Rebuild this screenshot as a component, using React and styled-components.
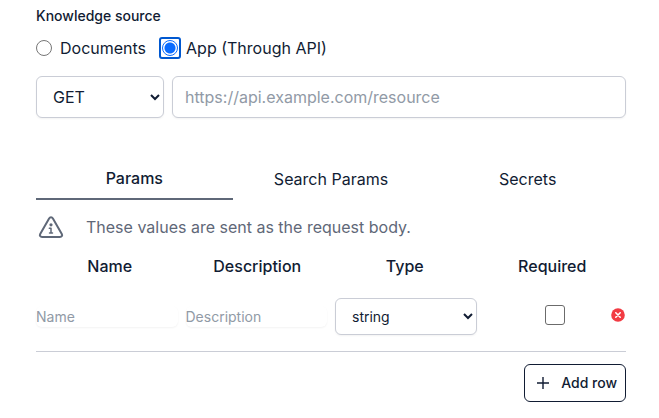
import React, { useState } from "react";
import styled, { createGlobalStyle } from "styled-components";

const ink = "#111c33";
const line = "#cacdd6";
const muted = "#5f6878";

const GlobalStyle = createGlobalStyle`
  *, *::before, *::after { box-sizing: border-box; }
  body {
    margin: 0;
    background: #fff;
    color: ${ink};
    font-family: Inter, sans-serif;
    font-size: 16px;
    line-height: 24px;
  }
  button, input, select { font: inherit; color: inherit; margin: 0; }
`;

const Page = styled.main`
  padding: 6px 33px 16px 36px;
`;

const SourceGroup = styled.fieldset`
  border: 0;
  margin: 0;
  padding: 0;
`;

const Legend = styled.legend`
  padding: 0;
  font-size: 14px;
  line-height: 20px;
  font-weight: 500;
`;

const Choices = styled.div`
  display: flex;
  gap: 13px;
  padding-top: 10px;
`;

const Choice = styled.label`
  display: flex;
  align-items: center;
  gap: 8px;
`;

const RadioFrame = styled.span`
  display: flex;
  padding: ${(p) => (p.$on ? "1px" : "0")};
  border: ${(p) => (p.$on ? "2px solid #0058d0" : "0")};
  border-radius: 3px;
  margin-right: ${(p) => (p.$on ? "-3px" : "0")};
`;

const Radio = styled.input`
  appearance: none;
  flex: none;
  width: 16px;
  height: 16px;
  border: 1px solid #767676;
  border-radius: 50%;
  background: #fff;

  &:checked {
    border-color: #0a6cff;
    background: radial-gradient(circle, #0a6cff 0 5px, #fff 6px);
  }
`;

const RequestRow = styled.div`
  display: flex;
  gap: 8px;
  margin-top: 16px;
`;

const Select = styled.select`
  width: ${(p) => p.$width};
  height: ${(p) => (p.$small ? "37px" : "42px")};
  padding: ${(p) => (p.$small ? "7px" : "8px")} 0 8px 12px;
  border: 1px solid ${line};
  border-radius: 6px;
  background: #fff;
  box-shadow: 0 1px 2px rgba(0, 0, 0, 0.05);
  font-size: ${(p) => (p.$small ? "14px" : "16px")};
`;

const UrlInput = styled.input`
  flex: 1;
  min-width: 0;
  height: 42px;
  padding: 8px 12px;
  border: 1px solid ${line};
  border-radius: 6px;
  box-shadow: 0 1px 2px rgba(0, 0, 0, 0.05);

  &::placeholder { color: #919aa6; }
`;

const Tabs = styled.div`
  display: grid;
  grid-template-columns: repeat(3, 1fr);
  margin-top: 40px;
`;

const Tab = styled.button`
  height: 42px;
  padding: 0;
  border: 0;
  border-bottom: ${(p) => (p.$active ? `2px solid ${muted}` : "0")};
  background: none;
  font-weight: ${(p) => (p.$active ? 500 : 400)};
`;

const Notice = styled.p`
  display: flex;
  align-items: center;
  gap: 22px;
  margin: 12px 0 0;
  padding-left: 2px;
  height: 30px;
  color: ${muted};
`;

const Table = styled.table`
  display: block;
  margin-top: 12px;
  border-bottom: 1px solid ${line};
`;

const TableSection = styled.thead`
  display: block;
`;

const TableRow = styled.tr`
  display: grid;
  grid-template-columns: repeat(4, minmax(0, 1fr));
  align-items: center;
  gap: ${(p) => (p.$body ? "8px" : "0")};
  padding: ${(p) => (p.$body ? "20px 0 16px" : "0")};
`;

const HeadCell = styled.th`
  padding: 0;
  font-weight: 500;
  text-align: center;
`;

const Cell = styled.td`
  display: flex;
  padding: 0;
`;

const ActionCell = styled(Cell)`
  display: grid;
  grid-template-columns: 1fr auto 1fr;
  align-items: center;
  padding-bottom: 3px;
`;

const PlainInput = styled.input`
  width: 100%;
  height: 21px;
  padding: 0;
  border: 0;
  border-radius: 6px;
  background: #fff;
  box-shadow: 0 1px 2px rgba(0, 0, 0, 0.05);
  font-size: 14px;
  line-height: 20px;

  &::placeholder { color: #919aa6; }
`;

const Checkbox = styled.input`
  appearance: none;
  grid-column: 2;
  width: 20px;
  height: 20px;
  border: 1px solid #6b6b6b;
  border-radius: 3px;
  background: #fff;

  &:checked { background: #0a6cff; }
`;

const DeleteButton = styled.button`
  display: flex;
  justify-self: end;
  padding: 0;
  border: 0;
  background: none;
`;

const Footer = styled.div`
  display: flex;
  justify-content: flex-end;
  margin-top: 12px;
`;

const AddButton = styled.button`
  display: flex;
  align-items: center;
  gap: 10px;
  padding: 8px 8px 8px 10px;
  border: 1px solid ${ink};
  border-radius: 6px;
  background: #fff;
  font-size: 14px;
  line-height: 20px;
  font-weight: 500;
`;

function InfoTriangle() {
  return (
    <svg width="26" height="24" viewBox="0 0 26 24" fill="none" stroke="currentColor" strokeLinecap="round" strokeLinejoin="round" aria-hidden="true">
      <path strokeWidth="2" d="M11.1 3.4 2.2 18.9c-.9 1.6 0 3 1.9 3h17.8c1.9 0 2.8-1.4 1.9-3L14.9 3.4c-.9-1.5-2.9-1.5-3.8 0Z" />
      <circle cx="13" cy="9.8" r="1.6" fill="currentColor" stroke="none" />
      <path strokeWidth="1.5" d="M11.3 13.2H13v4.6M11.5 18h3" />
    </svg>
  );
}

function CloseDisc() {
  return (
    <svg width="16" height="16" viewBox="0 0 16 16" aria-hidden="true">
      <circle cx="8" cy="8" r="6.8" fill="#f23b43" />
      <path d="m5.8 5.8 4.4 4.4m0-4.4-4.4 4.4" stroke="#fff" strokeWidth="1.6" strokeLinecap="round" />
    </svg>
  );
}

function Plus() {
  return (
    <svg width="16" height="16" viewBox="0 0 16 16" stroke="currentColor" strokeWidth="1.4" aria-hidden="true">
      <path d="M8 2v12M2 8h12" />
    </svg>
  );
}

const sources = ["Documents", "App (Through API)"];
const tabs = ["Params", "Search Params", "Secrets"];
const columns = ["Name", "Description", "Type", "Required"];

export default function App() {
  const [source, setSource] = useState(sources[1]);
  const [tab, setTab] = useState(tabs[0]);
  const [rows, setRows] = useState([0]);

  return (
    <>
      <GlobalStyle />
      <Page>
        <SourceGroup>
          <Legend>Knowledge source</Legend>
          <Choices>
            {sources.map((name) => (
              <Choice key={name}>
                <RadioFrame $on={source === name}>
                  <Radio type="radio" name="source" checked={source === name} onChange={() => setSource(name)} />
                </RadioFrame>
                {name}
              </Choice>
            ))}
          </Choices>
        </SourceGroup>

        <RequestRow>
          <Select $width="128px" aria-label="Method" defaultValue="GET">
            <option>GET</option>
            <option>POST</option>
          </Select>
          <UrlInput type="url" aria-label="URL" placeholder="https://api.example.com/resource" />
        </RequestRow>

        <Tabs role="tablist">
          {tabs.map((name) => (
            <Tab key={name} role="tab" aria-selected={tab === name} $active={tab === name} onClick={() => setTab(name)}>
              {name}
            </Tab>
          ))}
        </Tabs>

        <Notice>
          <InfoTriangle />
          These values are sent as the request body.
        </Notice>

        <Table>
          <TableSection>
            <TableRow>
              {columns.map((name) => (
                <HeadCell key={name} scope="col">{name}</HeadCell>
              ))}
            </TableRow>
          </TableSection>
          <TableSection as="tbody">
            {rows.map((id) => (
              <TableRow key={id} $body>
                <Cell><PlainInput aria-label="Name" placeholder="Name" /></Cell>
                <Cell><PlainInput aria-label="Description" placeholder="Description" /></Cell>
                <Cell>
                  <Select $small $width="100%" aria-label="Type" defaultValue="string">
                    <option>string</option>
                    <option>number</option>
                  </Select>
                </Cell>
                <ActionCell>
                  <Checkbox type="checkbox" aria-label="Required" />
                  <DeleteButton aria-label="Delete row" onClick={() => setRows(rows.filter((r) => r !== id))}>
                    <CloseDisc />
                  </DeleteButton>
                </ActionCell>
              </TableRow>
            ))}
          </TableSection>
        </Table>

        <Footer>
          <AddButton onClick={() => setRows([...rows, Date.now()])}>
            <Plus />
            Add row
          </AddButton>
        </Footer>
      </Page>
    </>
  );
}
